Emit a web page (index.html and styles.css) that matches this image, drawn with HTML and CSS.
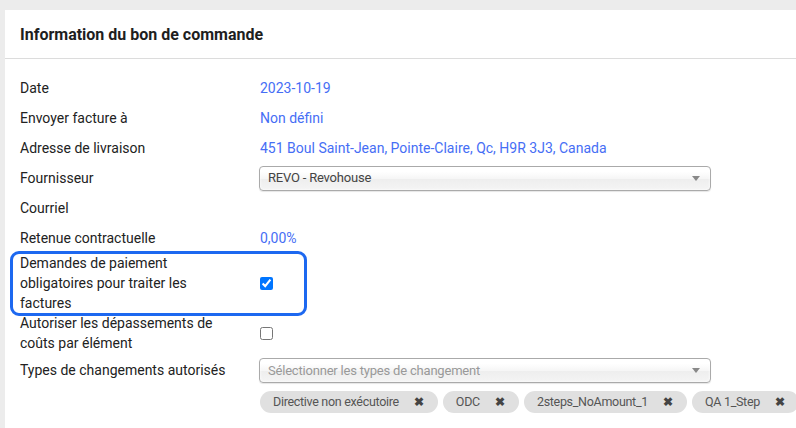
FILE: index.html
```html
<!DOCTYPE html>
<html lang="fr">

<head>
  <meta charset="UTF-8">
  <meta name="viewport" content="width=device-width, initial-scale=1.0">
  <title>Information du bon de commande</title>

  <link rel="stylesheet" href="styles.css">
</head>

<body>
  <div class="panel">
    <div class="panel-header">
      <h2>Information du bon de commande</h2>
    </div>

    <div class="panel-body">
      <div class="row">
        <div class="label">Date</div>
        <div class="value"><a href="#">2023-10-19</a></div>
      </div>
      <div class="row">
        <div class="label">Envoyer facture à</div>
        <div class="value"><a href="#">Non défini</a></div>
      </div>
      <div class="row">
        <div class="label">Adresse de livraison</div>
        <div class="value"><a href="#">451 Boul Saint-Jean, Pointe-Claire, Qc, H9R 3J3, Canada</a></div>
      </div>
      <div class="row">
        <div class="label">Fournisseur</div>
        <div class="value">
          <div class="chosen">
            <span>REVO - Revohouse</span>
            <i class="arrow"></i>
          </div>
        </div>
      </div>
      <div class="row">
        <div class="label">Courriel</div>
        <div class="value"></div>
      </div>
      <div class="row">
        <div class="label">Retenue contractuelle</div>
        <div class="value"><a href="#">0,00%</a></div>
      </div>
      <div class="row">
        <div class="label">Demandes de paiement obligatoires pour traiter les factures</div>
        <div class="value"><input type="checkbox" checked></div>
      </div>
      <div class="row">
        <div class="label">Autoriser les dépassements de coûts par élément</div>
        <div class="value"><input type="checkbox"></div>
      </div>
      <div class="row row-top">
        <div class="label">Types de changements autorisés</div>
        <div class="value">
          <div class="chosen placeholder">
            <span>Sélectionner les types de changement</span>
            <i class="arrow"></i>
          </div>
          <div class="chips">
            <span class="chip">Directive non exécutoire <b>✖</b></span>
            <span class="chip">ODC <b>✖</b></span>
            <span class="chip">2steps_NoAmount_1 <b>✖</b></span>
            <span class="chip">QA 1_Step <b>✖</b></span>
          </div>
        </div>
      </div>
    </div>

    <!-- highlight around the mandatory payment request setting -->
    <div class="highlight"></div>
  </div>
</body>

</html>
```

FILE: styles.css
```css
body {
  margin: 0;
  background-color: #ececec;
  font-family: Roboto, "Liberation Sans", sans-serif;
  color: #222;
  font-size: 14px;
  overflow: hidden;
}

.panel {
  background-color: #fff;
  margin: 10px 0 0 5px;
  min-height: 430px;
  position: relative;
}

.panel-header {
  border-bottom: 1px solid #dcdcdc;
  height: 48px;
  display: flex;
  align-items: center;
  padding: 0 15px;
}

.panel-header>h2 {
  font-size: 16px;
  font-weight: 700;
  margin: 0;
  color: #1e1e1e;
}

.panel-body {
  padding: 14px 15px 0;
}

.row {
  display: flex;
  align-items: center;
  min-height: 30px;
  line-height: 20px;
}

.row-top {
  align-items: flex-start;
  padding-top: 5px;
}

.row-top>.label {
  padding-top: 2px;
}

.label {
  width: 220px;
  padding-right: 20px;
  flex-shrink: 0;
}

.value {
  flex: 1;
}

.value a {
  color: #466ef5;
  text-decoration: none;
}

.value input[type=checkbox] {
  margin: 0;
  width: 13px;
  height: 13px;
  display: block;
}

.chosen {
  width: 432px;
  height: 23px;
  border: 1px solid #aaa;
  border-radius: 4px;
  background: linear-gradient(#fff 20%, #f6f6f6 50%, #eee 52%, #f4f4f4 100%);
  box-shadow: 0 0 3px #fff inset, 0 1px 1px rgba(0, 0, 0, 0.1);
  display: flex;
  align-items: center;
  justify-content: space-between;
  padding: 0 10px 0 8px;
  font-size: 13px;
  letter-spacing: -0.2px;
  color: #444;
  margin-left: -1px;
}

.chosen.placeholder {
  color: #999;
}

.arrow {
  width: 0;
  height: 0;
  border-left: 4px solid transparent;
  border-right: 4px solid transparent;
  border-top: 5px solid #888;
}

.chips {
  display: flex;
  gap: 5px;
  margin-top: 8px;
}

.chip {
  background-color: #e0e0e0;
  border-radius: 11px;
  height: 22px;
  line-height: 22px;
  padding: 0 14px 0 13px;
  font-size: 12.5px;
  letter-spacing: -0.3px;
  color: #555;
  white-space: nowrap;
  display: flex;
  align-items: center;
  gap: 15px;
}

.chip>b {
  font-size: 12px;
  color: #444;
  letter-spacing: 0;
}

.highlight {
  position: absolute;
  left: 5px;
  top: 241px;
  width: 291px;
  height: 59px;
  border: 3px solid #1d68f0;
  border-radius: 9px;
  pointer-events: none;
}
```
